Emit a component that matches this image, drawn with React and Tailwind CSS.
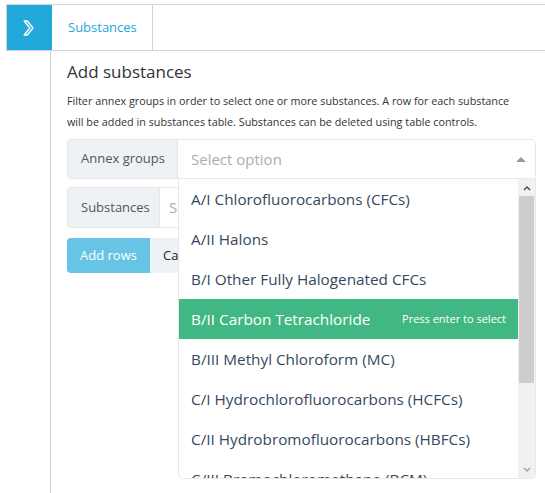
import React from "react";

const options = [
  "A/I Chlorofluorocarbons (CFCs)",
  "A/II Halons",
  "B/I Other Fully Halogenated CFCs",
  "B/II Carbon Tetrachloride",
  "B/III Methyl Chloroform (MC)",
  "C/I Hydrochlorofluorocarbons (HCFCs)",
  "C/II Hydrobromofluorocarbons (HBFCs)",
  "C/III Bromochloromethane (BCM)",
];

export default function App() {
  return (
    <div
      className="w-[545px] h-[493px] bg-white overflow-hidden pt-[4px] pl-[6px]"
      style={{ fontFamily: '"Open Sans", "Noto Sans", sans-serif' }}
    >
      <div className="flex h-[47px] border-y border-l border-[#cfd4da]">
        <div className="w-[45px] bg-[#23a8dc] flex items-center justify-center">
          <svg width="16" height="18" viewBox="0 0 16 18">
            <path
              d="M2.2 2 L5.4 2 L11 9 L5.4 16 L2.2 16 L7.8 9 Z"
              fill="none"
              stroke="white"
              strokeWidth="1.4"
              strokeLinejoin="round"
            />
          </svg>
        </div>
        <div className="w-[101px] border-r border-[#cfd4da] flex items-center pl-[16px] text-[13px] text-[#23a8dc]">
          Substances
        </div>
      </div>
      <div className="ml-[44px] border-l border-[#cfd4da] h-[460px] pl-[16px] pr-[9px] text-[#333]">
        <h3 className="text-[17px] leading-[22px] pt-[10px] mb-[7px]">Add substances</h3>
        <p className="text-[10.8px] leading-[21px] whitespace-nowrap">
          Filter annex groups in order to select one or more substances. A row for each substance
          <br />
          will be added in substances table. Substances can be deleted using table controls.
        </p>
        <div className="mt-[7px] flex h-[40px] relative">
          <div className="w-[111px] shrink-0 bg-[#eef1f5] border border-[#e5e5e5] rounded-l-[4px] flex items-center pl-[13px] text-[13px] text-[#555]">
            Annex groups
          </div>
          <div className="flex-1 relative">
            <div className="h-[40px] border-y border-r border-[#e8e8e8] rounded-tr-[5px] bg-white flex items-center pl-[13px] text-[15px] text-[#adadad]">
              Select option
              <div className="absolute right-[10px] top-[18px] w-0 h-0 border-x-[5px] border-x-transparent border-b-[5px] border-b-[#999]"></div>
            </div>
            <div className="absolute left-0 right-0 top-[40px] h-[300px] bg-white border-x border-b border-[#e8e8e8] rounded-b-[5px] overflow-hidden z-10 flex">
              <ul className="flex-1">
                {options.map((o, i) => (
                  <li
                    key={o}
                    className={
                      "h-[40px] flex items-center justify-between pl-[12px] pr-[12px] text-[15.3px] whitespace-nowrap " +
                      (i === 3 ? "bg-[#41b883] text-white" : "text-[#35495e]")
                    }
                  >
                    <span>{o}</span>
                    {i === 3 && <span className="text-[11px]">Press enter to select</span>}
                  </li>
                ))}
              </ul>
              <div className="w-[17px] bg-[#f1f1f1] flex flex-col items-center">
                <div className="h-[17px] flex items-center justify-center">
                  <svg width="8" height="6" viewBox="0 0 8 6"><path d="M1 5 L4 2 L7 5" fill="none" stroke="#505050" strokeWidth="1.5" /></svg>
                </div>
                <div className="w-[15px] h-[187px] bg-[#cdcdcd]"></div>
                <div className="flex-1"></div>
                <div className="h-[17px] flex items-center justify-center">
                  <svg width="8" height="6" viewBox="0 0 8 6"><path d="M1 1 L4 4 L7 1" fill="none" stroke="#a3a3a3" strokeWidth="1.5" /></svg>
                </div>
              </div>
            </div>
          </div>
        </div>
        <div className="mt-[8px] flex h-[41px]">
          <div className="w-[93px] shrink-0 bg-[#eef1f5] border border-[#e5e5e5] rounded-l-[4px] flex items-center pl-[13px] text-[13px] text-[#555]">
            Substances
          </div>
          <div className="flex-1 border-y border-r border-[#e8e8e8] rounded-r-[4px] flex items-center pl-[9px] text-[15px] text-[#adadad]">
            Select option
          </div>
        </div>
        <div className="mt-[10px] flex h-[35px]">
          <div className="w-[83px] bg-[#67c4e4] rounded-l-[4px] flex items-center justify-center text-[13px] text-white">
            Add rows
          </div>
          <div className="w-[70px] bg-[#eef1f5] rounded-r-[4px] flex items-center pl-[13px] text-[13px] text-[#222]">
            Cancel
          </div>
        </div>
      </div>
    </div>
  );
}
